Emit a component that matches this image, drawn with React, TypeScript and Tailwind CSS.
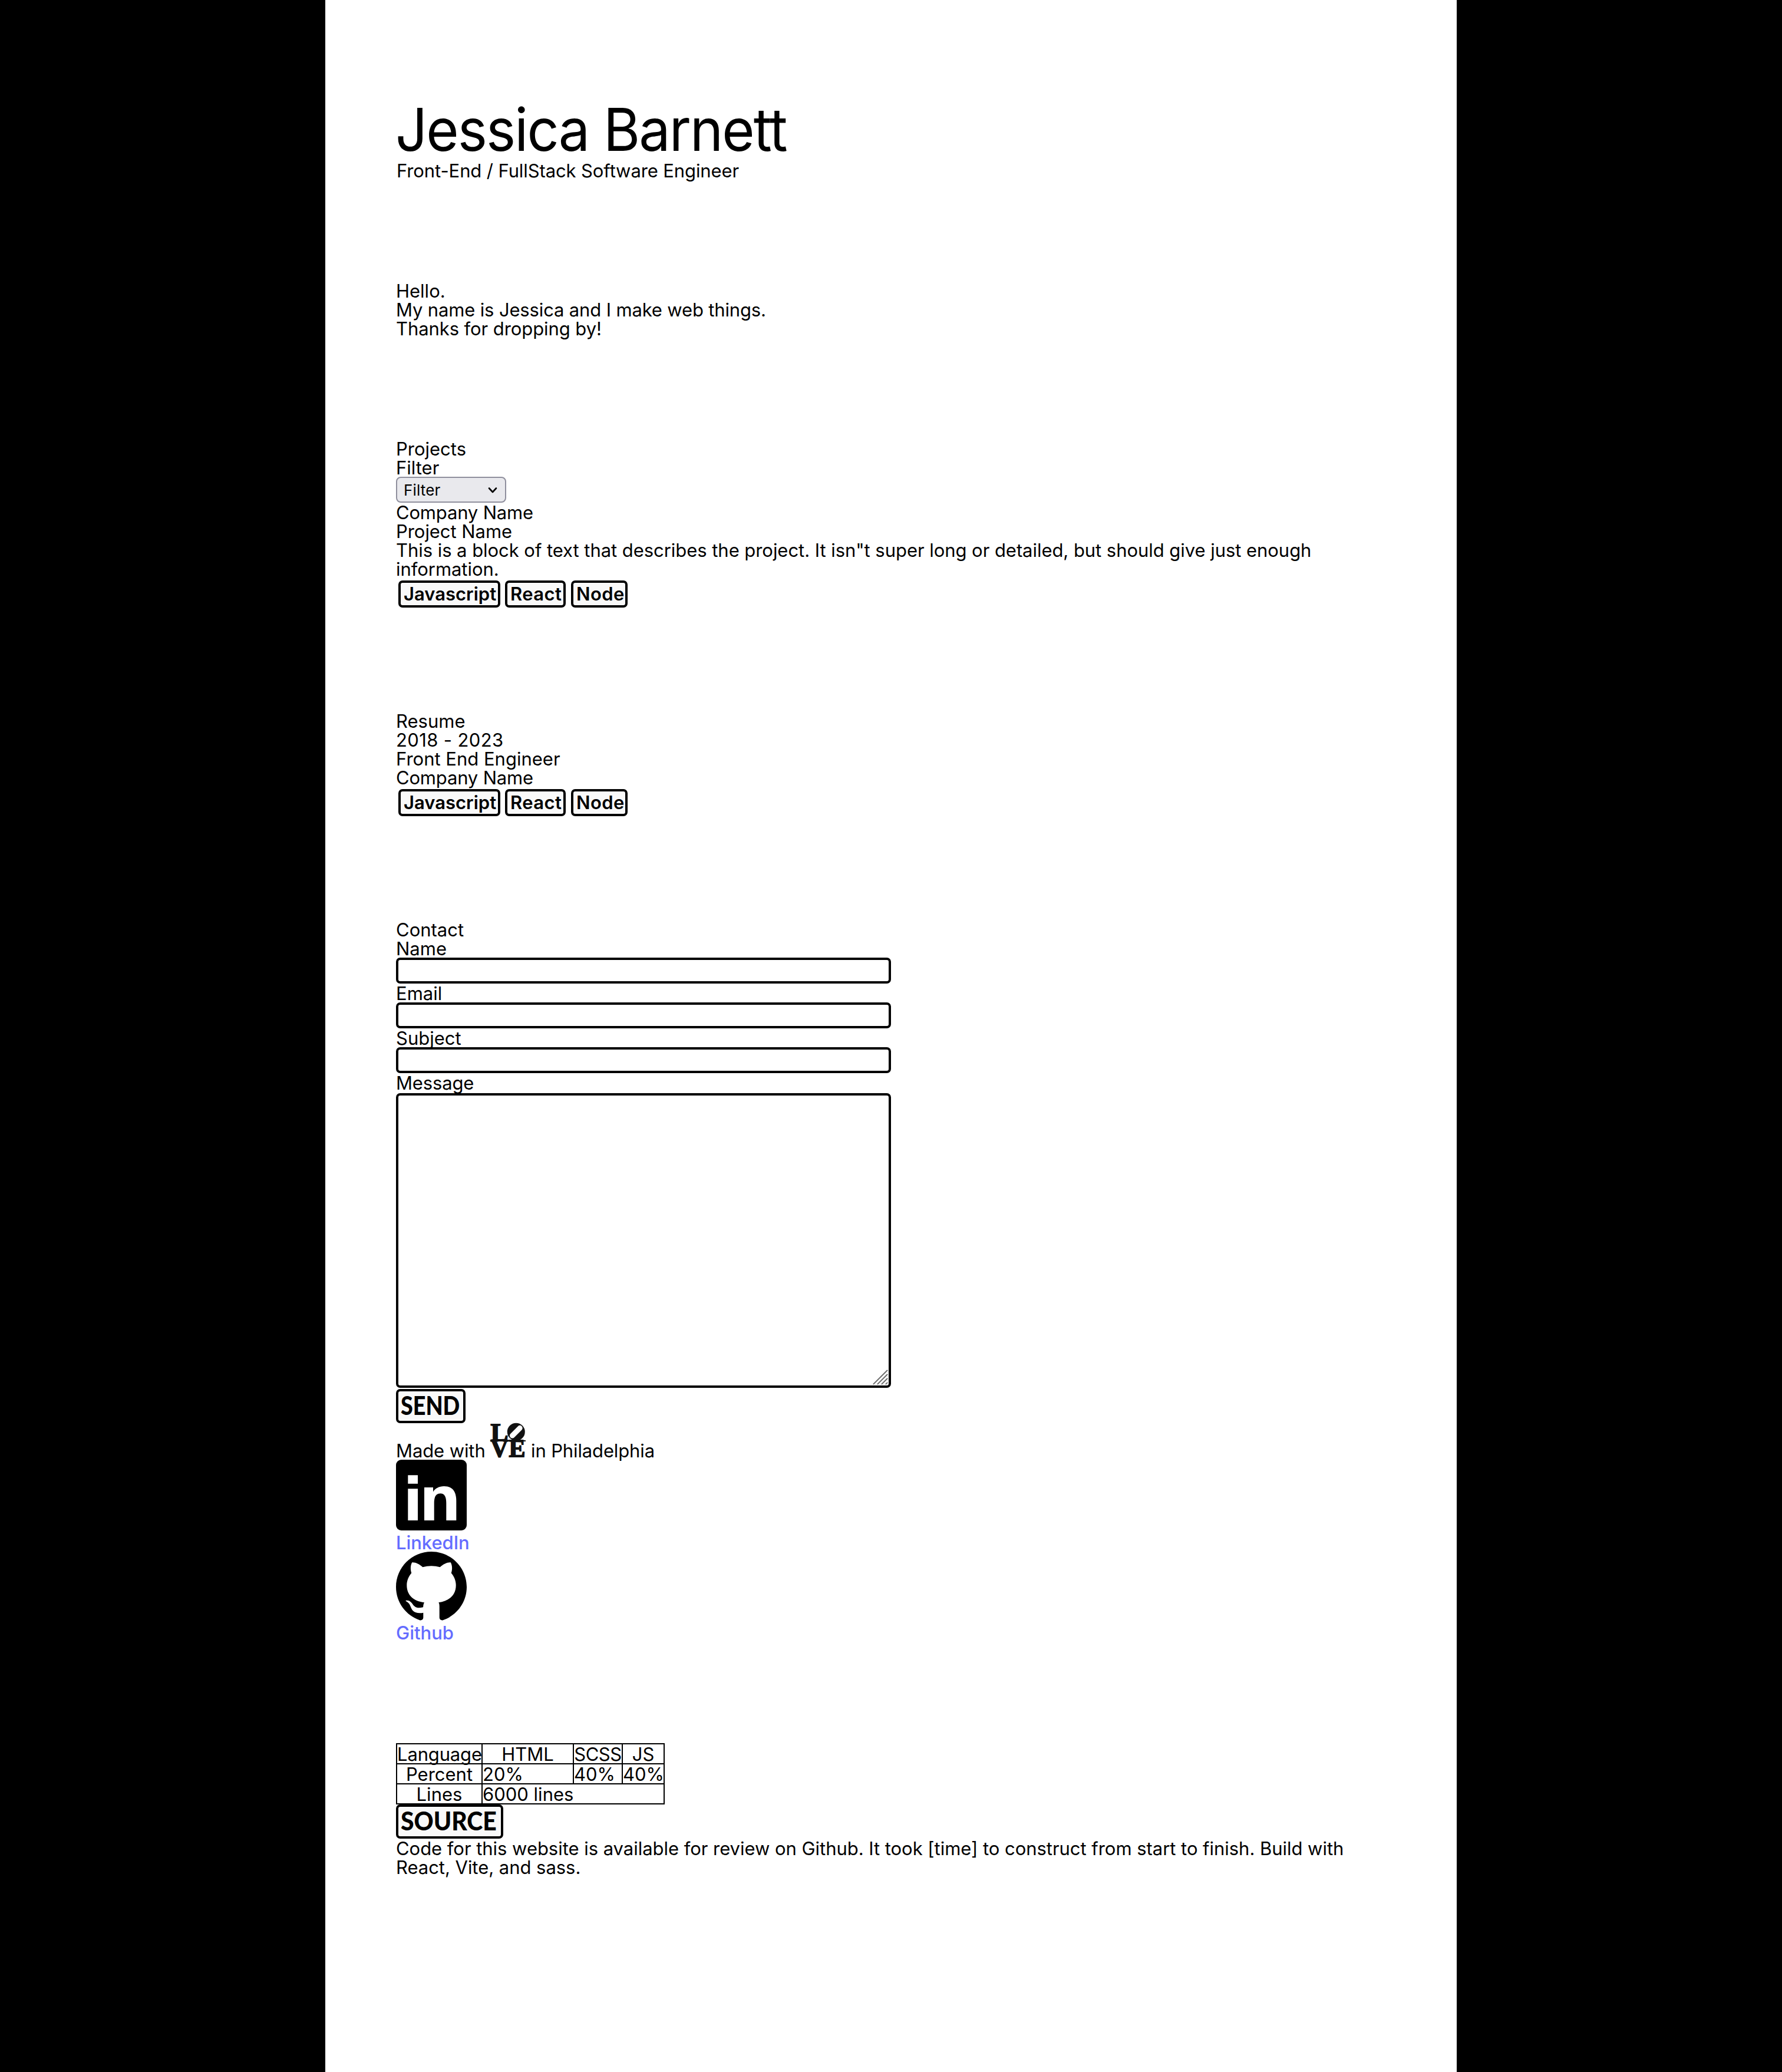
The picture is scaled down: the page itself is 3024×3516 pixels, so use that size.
import type { ReactNode } from "react";

function Tag({ children, className }: { children: ReactNode; className: string }) {
  return (
    <button
      className={`flex h-[46px] items-start rounded-[7px] border-4 border-black bg-[#f9f9f9] pl-[5px] text-left font-semibold leading-[37px] whitespace-nowrap ${className}`}
    >
      {children}
    </button>
  );
}

function Tags() {
  return (
    <div className="mt-[3px] ml-[4px] flex">
      <Tag className="w-[173px]">Javascript</Tag>
      <Tag className="ml-[8px] w-[103px] tracking-[0.4px]">React</Tag>
      <Tag className="ml-[9px] w-[96px] tracking-[0.4px]">Node</Tag>
    </div>
  );
}

function Field({ label, className }: { label: string; className?: string }) {
  return (
    <label className={`block ${className ?? ""}`}>
      <span className="block h-[31px]">{label}</span>
      <input className="block h-[44px] w-[840px] rounded-[7px] border-4 border-black bg-white outline-none" />
    </label>
  );
}

function LoveMark() {
  return (
    <svg viewBox="0 0 60 58" className="mb-[4px] h-[58px] w-[60px] overflow-visible" role="img" aria-label="Love">
      <g fill="#111" stroke="#111" strokeWidth="1.8" fontFamily="'Liberation Serif', serif" fontWeight="700" fontSize="43">
        <text x="0.5" y="29.5" textLength="30" lengthAdjust="spacingAndGlyphs">L</text>
        <text x="0.5" y="57" textLength="30" lengthAdjust="spacingAndGlyphs">V</text>
        <text x="31.5" y="57" textLength="28" lengthAdjust="spacingAndGlyphs">E</text>
      </g>
      <path d="M0 30H60" stroke="#111" strokeWidth="2" />
      <circle cx="43.8" cy="14.7" r="15" fill="#111" />
      <rect x="30.3" y="10.2" width="27" height="9" rx="4.5" fill="#fff" transform="rotate(-45 43.8 14.7)" />
    </svg>
  );
}

function LinkedInMark() {
  return (
    <svg viewBox="0 0 120 120" className="block size-[120px]" aria-hidden="true">
      <rect width="120" height="120" rx="9" />
      <g fill="#fff">
        <path d="M20.3 26.3H37V40.8H20.3zM20.3 49.3H37V103H20.3z" />
        <path d="M48 103V47H63V54.5C66 49 73 45 81.5 45C96 45 102.3 54 102.3 70V103H85.3V74C85.3 64 83 57.3 75.5 57.3C67 57.3 64.7 64 64.7 74V103Z" />
      </g>
    </svg>
  );
}

function GithubMark() {
  return (
    <svg viewBox="0 0 120 118" className="-mt-px block h-[118px] w-[120px]" aria-hidden="true">
      <path d="M60 0C26.9 0 0 26.9 0 60C0 86.200 17 108.300 40.200 116.200C43.500 117 46.300 115 46.300 112V103.700C40 105 32.500 104.500 28.500 100C25 96 24.500 90 21 87C19 85.200 15 83.500 16.800 82.900C22 82 25.500 85 28.500 89.500C32.500 95.500 38 96.300 46.100 94.200C46.200 91 46.800 88.500 48 86.300C30 84 18.300 74 18.300 57C18.300 49 21.500 42 26.300 36.300C24.500 31 24 24 27.300 18.300C33 17.800 39.500 21 45.300 26.200C55 23.500 65 23.500 74.700 26.200C80.500 21 87 17.800 92.700 18.300C96 24 95.500 31 93.700 36.300C98.500 42 101.700 49 101.700 57C101.700 74 90 84 72.300 86.300C73.300 88 73.700 90 73.700 93V112C73.700 115 76.500 117 79.800 116.200C103 108.300 120 86.200 120 60C120 26.900 93.100 0 60 0Z" />
    </svg>
  );
}

export default function App() {
  return (
    <div className="flex min-h-[3516px] justify-center bg-black">
      <main className="w-[1920px] bg-white px-[120px] pt-[162px] font-['Inter',sans-serif] text-[31px] leading-[32px] text-black">
        <header>
          <h1 className="-ml-px h-[112px] origin-left scale-x-95 text-[100px] leading-[115px] tracking-[-2px] whitespace-nowrap">
            Jessica Barnett
          </h1>
          <p className="ml-px tracking-[-0.107px]">Front-End / FullStack Software Engineer</p>
        </header>

        <section className="mt-[172px]">
          <p>Hello.</p>
          <p className="tracking-[-0.15px]">My name is Jessica and I make web things.</p>
          <p className="tracking-[-0.08px]">Thanks for dropping by!</p>
        </section>

        <section className="mt-[172px]">
          <h2>Projects</h2>
          <p>Filter</p>
          <button className="-mt-px mb-px flex h-[44px] w-[187px] items-center justify-between rounded-[8px] border-2 border-[#8f8f9d] bg-[#e9e9ed] pt-px pr-[12px] pl-[11px] text-[26px] tracking-[0.15px]">
            <span>Filter</span>
            <svg viewBox="0 0 18 12" className="mt-px h-[12px] w-[18px]" fill="none" stroke="#000" strokeWidth="2.6" strokeLinecap="round" strokeLinejoin="round">
              <path d="M3 2.5L9 9L15 2.5" />
            </svg>
          </button>
          <h3 className="tracking-[-0.18px]">Company Name</h3>
          <h4 className="tracking-[-0.05px]">Project Name</h4>
          <p className="tracking-[-0.05px]">
            <span className="block whitespace-nowrap">
              This is a block of text that describes the project. It isn"t super long or detailed, but should give just enough
            </span>
            information.
          </p>
          <Tags />
        </section>

        <section className="mt-[177px]">
          <h2>Resume</h2>
          <p className="tracking-[0.37px]">2018 - 2023</p>
          <p>Front End Engineer</p>
          <p className="tracking-[-0.18px]">Company Name</p>
          <Tags />
        </section>

        <section className="mt-[177px]">
          <h2>Contact</h2>
          <Field label="Name" />
          <Field label="Email" className="mt-px" />
          <Field label="Subject" className="mt-px" />
          <label className="mt-px block">
            <span className="block h-[33px] tracking-[-0.15px]">Message</span>
            <span className="relative block h-[500px] w-[840px]">
              <textarea className="block h-[500px] w-[840px] resize-none rounded-[7px] border-4 border-black bg-white outline-none" />
              <svg viewBox="0 0 26 26" className="absolute right-[5px] bottom-[5px] size-[26px]" stroke="#6b6b6b" strokeWidth="1.9" strokeLinecap="square">
                <path d="M1.5 24.5L24.5 1.5M8.500 24.5L24.5 8.5M15.5 24.5L24.5 15.5M22.5 24.5L24.5 22.5" />
              </svg>
            </span>
          </label>
          <button className="mt-[2px] block h-[58px] w-[118px] rounded-[7px] border-4 border-black bg-[#f9f9f9] pl-[4px] text-left">
            <span className="block h-[50px] origin-left scale-x-[0.857] font-['Lato',sans-serif] text-[44px] leading-[46px] font-black">SEND</span>
          </button>
        </section>

        <footer>
          <div className="flex h-[62px] items-end whitespace-nowrap">
            <span className="-mb-px w-[160px] tracking-[-0.1px]">Made with</span>
            <LoveMark />
            <span className="-mb-px ml-[9px] tracking-[-0.13px]">in Philadelphia</span>
          </div>
          <a className="block">
            <LinkedInMark />
            <span className="mt-[5px] block font-medium tracking-[-0.06px] text-[#646cff]">LinkedIn</span>
          </a>
          <a className="block">
            <GithubMark />
            <span className="mt-[4px] block font-medium text-[#646cff]">Github</span>
          </a>
        </footer>

        <section className="mt-[171px]">
          <table className="w-[456px] table-fixed border-collapse leading-[30px] [&_td]:border-2 [&_td]:border-black [&_td]:p-0 [&_td]:pt-[2px] [&_th]:border-2 [&_th]:border-black [&_th]:p-0 [&_th]:pt-[2px] [&_th]:font-normal">
            <colgroup>
              <col className="w-[145px]" />
              <col className="w-[155px]" />
              <col className="w-[83px]" />
              <col className="w-[71px]" />
            </colgroup>
            <tbody>
              <tr>
                <th className="tracking-[-0.15px]">Language</th>
                <th>HTML</th>
                <th className="tracking-[-0.5px]">SCSS</th>
                <th>JS</th>
              </tr>
              <tr>
                <th>Percent</th>
                <td>20%</td>
                <td>40%</td>
                <td>40%</td>
              </tr>
              <tr>
                <th>Lines</th>
                <td colSpan={3}>6000 lines</td>
              </tr>
            </tbody>
          </table>
          <button className="block h-[58px] w-[182px] rounded-[7px] border-4 border-black bg-[#f9f9f9] pl-[4px] text-left">
            <span className="block h-[50px] origin-left scale-x-[0.93] font-['Lato',sans-serif] text-[44px] leading-[46px] font-black">SOURCE</span>
          </button>
          <p className="mt-px tracking-[-0.036px]">
            <span className="block whitespace-nowrap">
              Code for this website is available for review on Github. It took [time] to construct from start to finish. Build with
            </span>
            React, Vite, and sass.
          </p>
        </section>
      </main>
    </div>
  );
}
